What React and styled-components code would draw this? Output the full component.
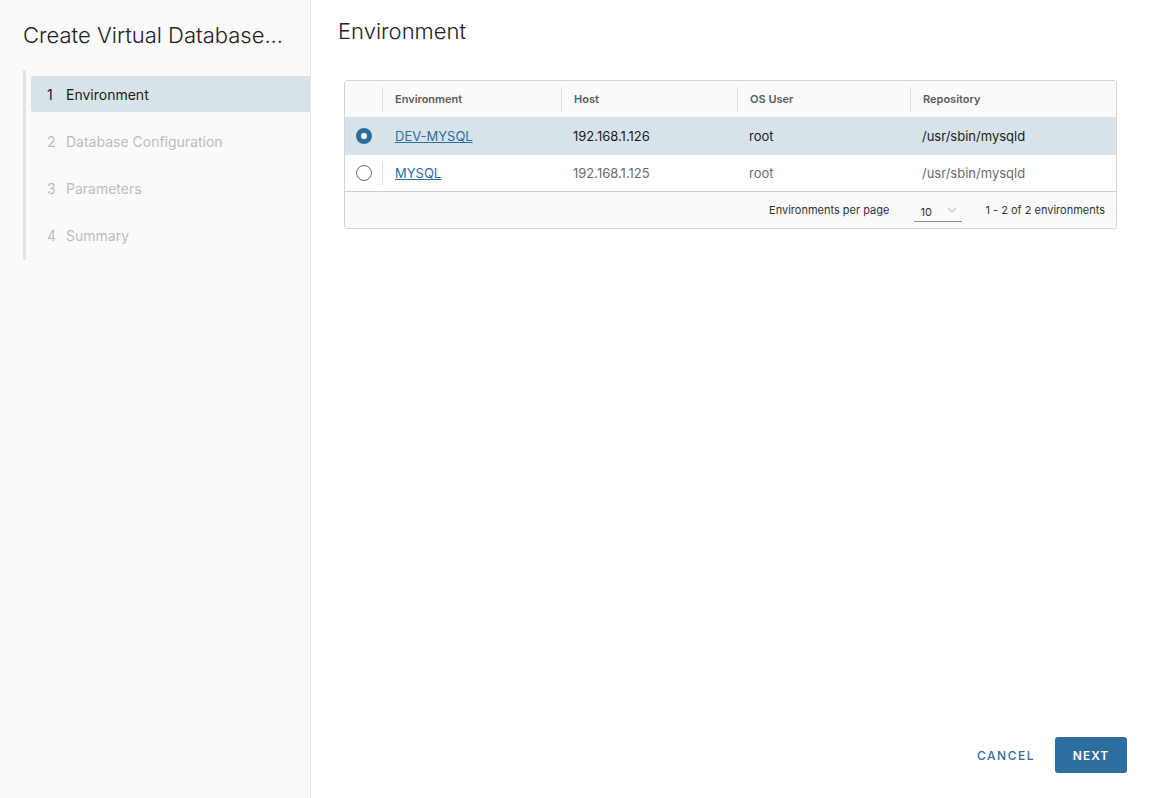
import React from 'react';
import styled, { createGlobalStyle } from 'styled-components';

const GlobalStyle = createGlobalStyle`
  html, body, #root {
    margin: 0;
    height: 100%;
  }
  body {
    font-family: Inter, Lato, sans-serif;
    color: #313131;
    background: #fff;
  }
`;

const Shell = styled.div`
  display: flex;
  height: 798px;
`;

const Sidebar = styled.aside`
  width: 310px;
  flex-shrink: 0;
  background: #fafafa;
  border-right: 1px solid #e6e6e6;
  padding-top: 21px;
`;

const WizardTitle = styled.h1`
  margin: 0 0 0 23px;
  font-size: 22px;
  font-weight: 300;
  color: #222;
  line-height: 28px;
  white-space: nowrap;
`;

const StepList = styled.ol`
  list-style: none;
  margin: 21px 0 0 23px;
  padding: 6px 0 7px 5px;
  border-left: 3px solid #e3e3e3;
  display: flex;
  flex-direction: column;
  gap: 11px;
`;

const Step = styled.li`
  height: 36px;
  display: flex;
  align-items: center;
  padding-left: 16px;
  font-size: 14px;
  border-radius: 3px 0 0 3px;
  background: ${p => (p.active ? '#d8e3e9' : 'transparent')};
  color: ${p => (p.active ? '#1b1b1b' : '#bdbdbd')};
  span {
    width: 19px;
  }
`;

const Main = styled.main`
  flex: 1;
  display: flex;
  flex-direction: column;
  padding: 17px 33px 25px 27px;
`;

const Heading = styled.h2`
  margin: 0;
  font-size: 22px;
  font-weight: 300;
  color: #222;
  line-height: 28px;
`;

const Grid = styled.div`
  margin: 35px 0 0 6px;
  border: 1px solid #d4d4d4;
  border-radius: 3px;
  overflow: hidden;
  font-size: 13px;
`;

const Row = styled.div`
  display: grid;
  grid-template-columns: 37px 179px 176px 173px 1fr;
  box-sizing: border-box;
  height: 37px;
  align-items: center;
  background: ${p => (p.selected ? '#d8e3e9' : p.head ? '#fafafa' : '#fff')};
  border-bottom: 1px solid #e2e2e2;
  color: ${p => (p.selected ? '#1b1b1b' : '#6b6b6b')};
`;

const HeadCell = styled.div`
  font-size: 11px;
  font-weight: 600;
  color: #5c5c5c;
  padding-left: 12px;
  border-left: 1px solid #dcdcdc;
  height: 24px;
  display: flex;
  align-items: center;
`;

const Cell = styled.div`
  padding-left: 12px;
  border-left: ${p => (p.divider ? '1px solid #dcdcdc' : 'none')};
  height: 24px;
  display: flex;
  align-items: center;
`;

const RadioCell = styled.div`
  display: flex;
  justify-content: center;
  align-items: center;
`;

const Radio = styled.span`
  width: 16px;
  height: 16px;
  border-radius: 50%;
  box-sizing: border-box;
  background: #fff;
  border: ${p => (p.checked ? '5.5px solid #2e6e9e' : '1px solid #6e6e6e')};
`;

const EnvLink = styled.a`
  color: #2e6e9e;
  text-decoration: underline;
  cursor: pointer;
`;

const Footer = styled.div`
  height: 37px;
  box-sizing: border-box;
  background: #fafafa;
  border-top: 1px solid #cfcfcf;
  margin-top: -1px;
  display: flex;
  align-items: center;
  justify-content: flex-end;
  padding-right: 11px;
  font-size: 11px;
  color: #333;
`;

const PageSize = styled.div`
  margin: 2px 23px 0 25px;
  width: 48px;
  height: 21px;
  border-bottom: 1px solid #8c8c8c;
  display: flex;
  align-items: center;
  justify-content: space-between;
  padding: 2px 5px 0 6px;
  box-sizing: border-box;
  svg {
    color: #b5b5b5;
    margin-bottom: 4px;
  }
`;

const Actions = styled.div`
  margin-top: auto;
  display: flex;
  justify-content: flex-end;
  align-items: center;
  gap: 20px;
  margin-right: -10px;
`;

const Button = styled.button`
  height: 36px;
  padding: 0 ${p => (p.primary ? '16px' : '0')};
  border: none;
  border-radius: 3px;
  font-family: inherit;
  font-size: 12px;
  font-weight: ${p => (p.primary ? 600 : 500)};
  letter-spacing: ${p => (p.primary ? '1px' : '1.5px')};
  background: ${p => (p.primary ? '#2e6e9e' : 'transparent')};
  color: ${p => (p.primary ? '#fff' : '#2e6e9e')};
  min-width: ${p => (p.primary ? '72px' : 'auto')};
  cursor: pointer;
`;

const rows = [
  { name: 'DEV-MYSQL', host: '192.168.1.126', user: 'root', repo: '/usr/sbin/mysqld', selected: true },
  { name: 'MYSQL', host: '192.168.1.125', user: 'root', repo: '/usr/sbin/mysqld' },
];

const steps = ['Environment', 'Database Configuration', 'Parameters', 'Summary'];

export default function App() {
  return (
    <>
      <GlobalStyle />
      <Shell>
        <Sidebar>
          <WizardTitle>Create Virtual Database...</WizardTitle>
          <StepList>
            {steps.map((s, i) => (
              <Step key={s} active={i === 0}>
                <span>{i + 1}</span>
                {s}
              </Step>
            ))}
          </StepList>
        </Sidebar>
        <Main>
          <Heading>Environment</Heading>
          <Grid>
            <Row head>
              <div />
              <HeadCell>Environment</HeadCell>
              <HeadCell>Host</HeadCell>
              <HeadCell>OS User</HeadCell>
              <HeadCell>Repository</HeadCell>
            </Row>
            {rows.map(r => (
              <Row key={r.name} selected={r.selected}>
                <RadioCell>
                  <Radio checked={r.selected} />
                </RadioCell>
                <Cell divider>
                  <EnvLink>{r.name}</EnvLink>
                </Cell>
                <Cell>{r.host}</Cell>
                <Cell>{r.user}</Cell>
                <Cell>{r.repo}</Cell>
              </Row>
            ))}
            <Footer>
              Environments per page
              <PageSize>
                10
                <svg width="10" height="6" viewBox="0 0 10 6" fill="none">
                  <path d="M1 1l4 4 4-4" stroke="currentColor" strokeWidth="1" />
                </svg>
              </PageSize>
              1 - 2 of 2 environments
            </Footer>
          </Grid>
          <Actions>
            <Button>CANCEL</Button>
            <Button primary>NEXT</Button>
          </Actions>
        </Main>
      </Shell>
    </>
  );
}
